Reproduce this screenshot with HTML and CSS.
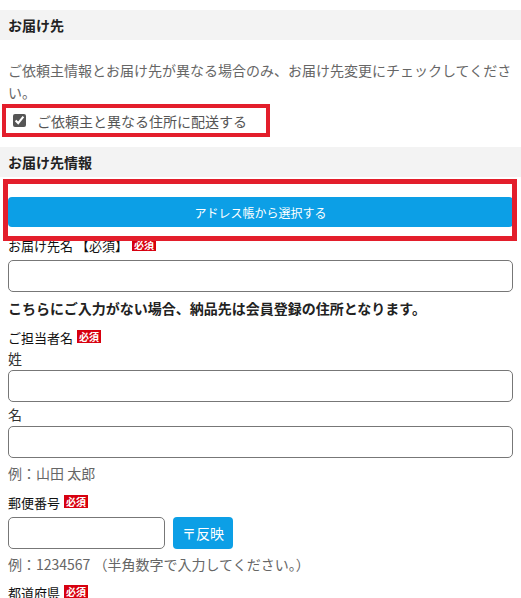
FILE: index.html
```html
<!DOCTYPE html>
<html lang="ja">
<head>
  <meta charset="UTF-8" />
  <meta name="viewport" content="width=device-width, initial-scale=1.0"/>
  <title>お届け先</title>
  <link rel="stylesheet" href="styles.css">
</head>
<body>

<div class="sec-head">お届け先</div>
<div class="wrap">
  <p class="note">ご依頼主情報とお届け先が異なる場合のみ、お届け先変更にチェックしてください。</p>
  <label class="check-row">
    <input type="checkbox" checked>
    <span>ご依頼主と異なる住所に配送する</span>
    <span class="mark mark-check"></span>
  </label>
</div>

<div class="sec-head head-gap">お届け先情報</div>
<div class="wrap">
  <div class="addr-row">
    <button class="btn-addr" type="button">アドレス帳から選択する</button>
    <span class="mark mark-addr"></span>
  </div>

  <div class="field field-first">
    <div class="field-label">お届け先名 【必須】<span class="req">必須</span></div>
    <input class="input" type="text">
  </div>
  <p class="strong-note">こちらにご入力がない場合、納品先は会員登録の住所となります。</p>

  <div class="field">
    <div class="field-label">ご担当者名<span class="req">必須</span></div>
    <div class="sub-label">姓</div>
    <input class="input" type="text">
    <div class="sub-label">名</div>
    <input class="input" type="text">
    <div class="hint">例：山田 太郎</div>
  </div>

  <div class="field">
    <div class="field-label">郵便番号<span class="req">必須</span></div>
    <div class="zip-row">
      <input class="input input-zip" type="text">
      <button class="btn-zip" type="button">〒反映</button>
    </div>
    <div class="hint">例：1234567 （半角数字で入力してください。）</div>
  </div>

  <div class="field field-last">
    <div class="field-label">都道府県<span class="req">必須</span></div>
  </div>
</div>

</body>
</html>
```

FILE: styles.css
```css
body {
  margin: 0;
  padding: 0;
  background: #fff;
  font-family: "Noto Sans CJK JP", "Noto Sans", sans-serif;
  font-size: 14px;
  color: #222;
  overflow: hidden;
}
.wrap {
  padding: 0 8px;
}
.sec-head {
  margin-top: 10px;
  height: 30px;
  line-height: 30px;
  padding: 0 8px;
  background: #f3f3f3;
  font-weight: bold;
  font-size: 14px;
  color: #222;
}
.head-gap {
  margin-top: 10px;
}
.note {
  margin: 19px 0 0;
  line-height: 22px;
  color: #666;
}
.check-row {
  position: relative;
  display: flex;
  align-items: center;
  gap: 11px;
  height: 33px;
  margin-top: 1px;
  padding-left: 5px;
  color: #555;
}
.check-row input {
  width: 13px;
  height: 13px;
  margin: 0;
  accent-color: #555;
}
.mark {
  position: absolute;
  box-sizing: border-box;
  border: 4px solid #e31e2b;
  pointer-events: none;
  z-index: 2;
}
.mark-check {
  left: -6px;
  top: 0;
  width: 268px;
  height: 33px;
}
.addr-row {
  position: relative;
  padding-top: 20px;
}
.mark-addr {
  left: -5px;
  top: 2px;
  width: 514px;
  height: 62px;
  border-width: 5px;
}
.btn-addr {
  display: block;
  width: 100%;
  height: 30px;
  border: none;
  border-radius: 4px;
  background: #0c9fe6;
  color: #fff;
  font-family: inherit;
  font-size: 12px;
  cursor: pointer;
}
.field {
  margin-top: 10px;
}
.field-first {
  margin-top: 9px;
}
.field-last {
  margin-top: 9px;
}
.field-label {
  line-height: 20px;
  font-size: 13px;
  color: #111;
}
.req {
  display: inline-block;
  margin-left: 4px;
  padding: 0 2px;
  background: #d7000f;
  color: #fff;
  font-size: 10px;
  font-weight: bold;
  line-height: 13px;
  vertical-align: 2px;
}
.input {
  display: block;
  box-sizing: border-box;
  width: 100%;
  height: 32px;
  margin: 4px 0 0;
  border: 1px solid #777;
  border-radius: 5px;
  background: #fff;
}
.sub-label {
  line-height: 20px;
  color: #333;
}
.sub-label + .input,
.input + .sub-label {
  margin-top: 2px;
}
.strong-note {
  margin: 6px 0 0;
  line-height: 20px;
  font-weight: bold;
  color: #222;
}
.hint {
  margin-top: 5px;
  line-height: 20px;
  color: #666;
}
.zip-row {
  display: flex;
  gap: 8px;
  margin-top: 4px;
}
.input-zip {
  width: 157px;
  margin: 0;
}
.btn-zip {
  width: 60px;
  height: 32px;
  border: none;
  border-radius: 4px;
  background: #0c9fe6;
  color: #fff;
  font-family: inherit;
  font-size: 14px;
  cursor: pointer;
}
```
